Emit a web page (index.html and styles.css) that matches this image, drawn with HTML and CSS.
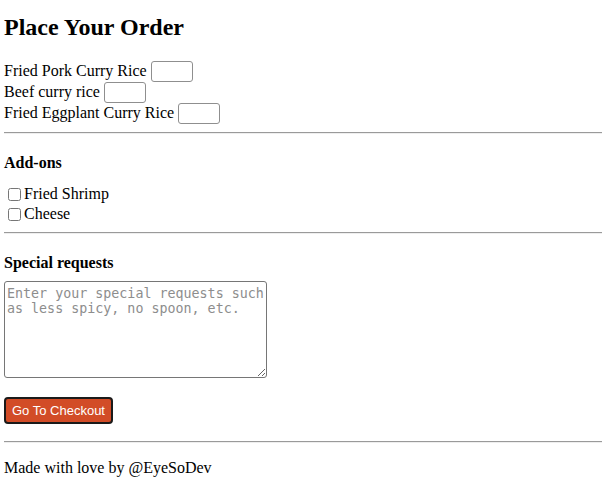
FILE: index.html
```html
<!DOCTYPE html>
<html lang="en">
<head>
<meta charset="utf-8">
<title>Place Your Order</title>
<link rel="stylesheet" href="styles.css">
</head>
<body>
<form class="order">
  <h1 class="title">Place Your Order</h1>
  <div class="items">
    <label class="item"><span class="item-name">Fried Pork Curry Rice</span><input class="qty" type="number"></label>
    <label class="item"><span class="item-name">Beef curry rice</span><input class="qty" type="number"></label>
    <label class="item"><span class="item-name">Fried Eggplant Curry Rice</span><input class="qty" type="number"></label>
  </div>
  <hr class="rule">
  <h4 class="section">Add-ons</h4>
  <div class="addons">
    <label class="addon"><input class="check" type="checkbox"><span>Fried Shrimp</span></label>
    <label class="addon"><input class="check" type="checkbox"><span>Cheese</span></label>
  </div>
  <hr class="rule">
  <h4 class="section section-tight">Special requests</h4>
  <textarea class="requests" placeholder="Enter your special requests such as less spicy, no spoon, etc."></textarea>
  <div class="actions">
    <button class="checkout" type="button">Go To Checkout</button>
  </div>
  <hr class="rule">
  <p class="footer">Made with love by @EyeSoDev</p>
</form>
</body>
</html>
```

FILE: styles.css
```css
html, body {
  background: #fff;
}
body {
  margin: 0;
  padding: 0 4px;
  font-family: "Liberation Serif", "Times New Roman", serif;
  font-size: 16px;
  color: #000;
}
.order {
  display: flow-root;
}
.title {
  font-size: 24px;
  font-weight: bold;
  line-height: 27px;
  margin: 14px 0 20px;
}
.items {
  display: flex;
  flex-direction: column;
}
.item {
  display: flex;
  align-items: flex-start;
  height: 21px;
}
.item-name {
  line-height: 19px;
  margin-right: 4px;
}
.qty {
  box-sizing: border-box;
  width: 42px;
  height: 21px;
  margin: 0;
  padding: 1px 2px;
  border: 1px solid #8f8f8f;
  border-radius: 3px;
  background: #fff;
  font-size: 13px;
  -moz-appearance: textfield;
}
.qty::-webkit-outer-spin-button,
.qty::-webkit-inner-spin-button {
  -webkit-appearance: none;
  margin: 0;
}
.rule {
  margin: 8px 0;
  height: 0;
  border: none;
  border-top: 1px solid #9a9a9a;
  border-bottom: 1px solid #eeeeee;
}
.section {
  font-size: 16px;
  font-weight: bold;
  line-height: 18px;
  margin: 20px 0 12px;
}
.section-tight {
  margin-bottom: 9px;
}
.addons {
  display: flex;
  flex-direction: column;
}
.addon {
  display: flex;
  align-items: center;
  height: 20px;
  line-height: 20px;
}
.check {
  width: 13px;
  height: 13px;
  margin: 0 3px 0 4px;
}
.requests {
  display: block;
  box-sizing: border-box;
  width: 263px;
  height: 97px;
  margin: 0;
  padding: 4px 1px 2px 2px;
  border: 1px solid #767676;
  border-radius: 3px;
  font-family: "DejaVu Sans Mono", monospace;
  font-size: 13.33px;
  line-height: normal;
  resize: both;
}
.requests::placeholder {
  color: #8d8d8d;
}
.actions {
  margin: 19px 0 17px;
}
.checkout {
  display: block;
  box-sizing: border-box;
  height: 27px;
  padding: 0 6px;
  margin: 0;
  background: #d24c27;
  color: #fff;
  border: 2px solid #1a1a1a;
  border-radius: 4px;
  font-family: "Liberation Sans", Arial, sans-serif;
  font-size: 13px;
  cursor: pointer;
}
.footer {
  margin: 16px 0 0;
  line-height: 18px;
}
```
